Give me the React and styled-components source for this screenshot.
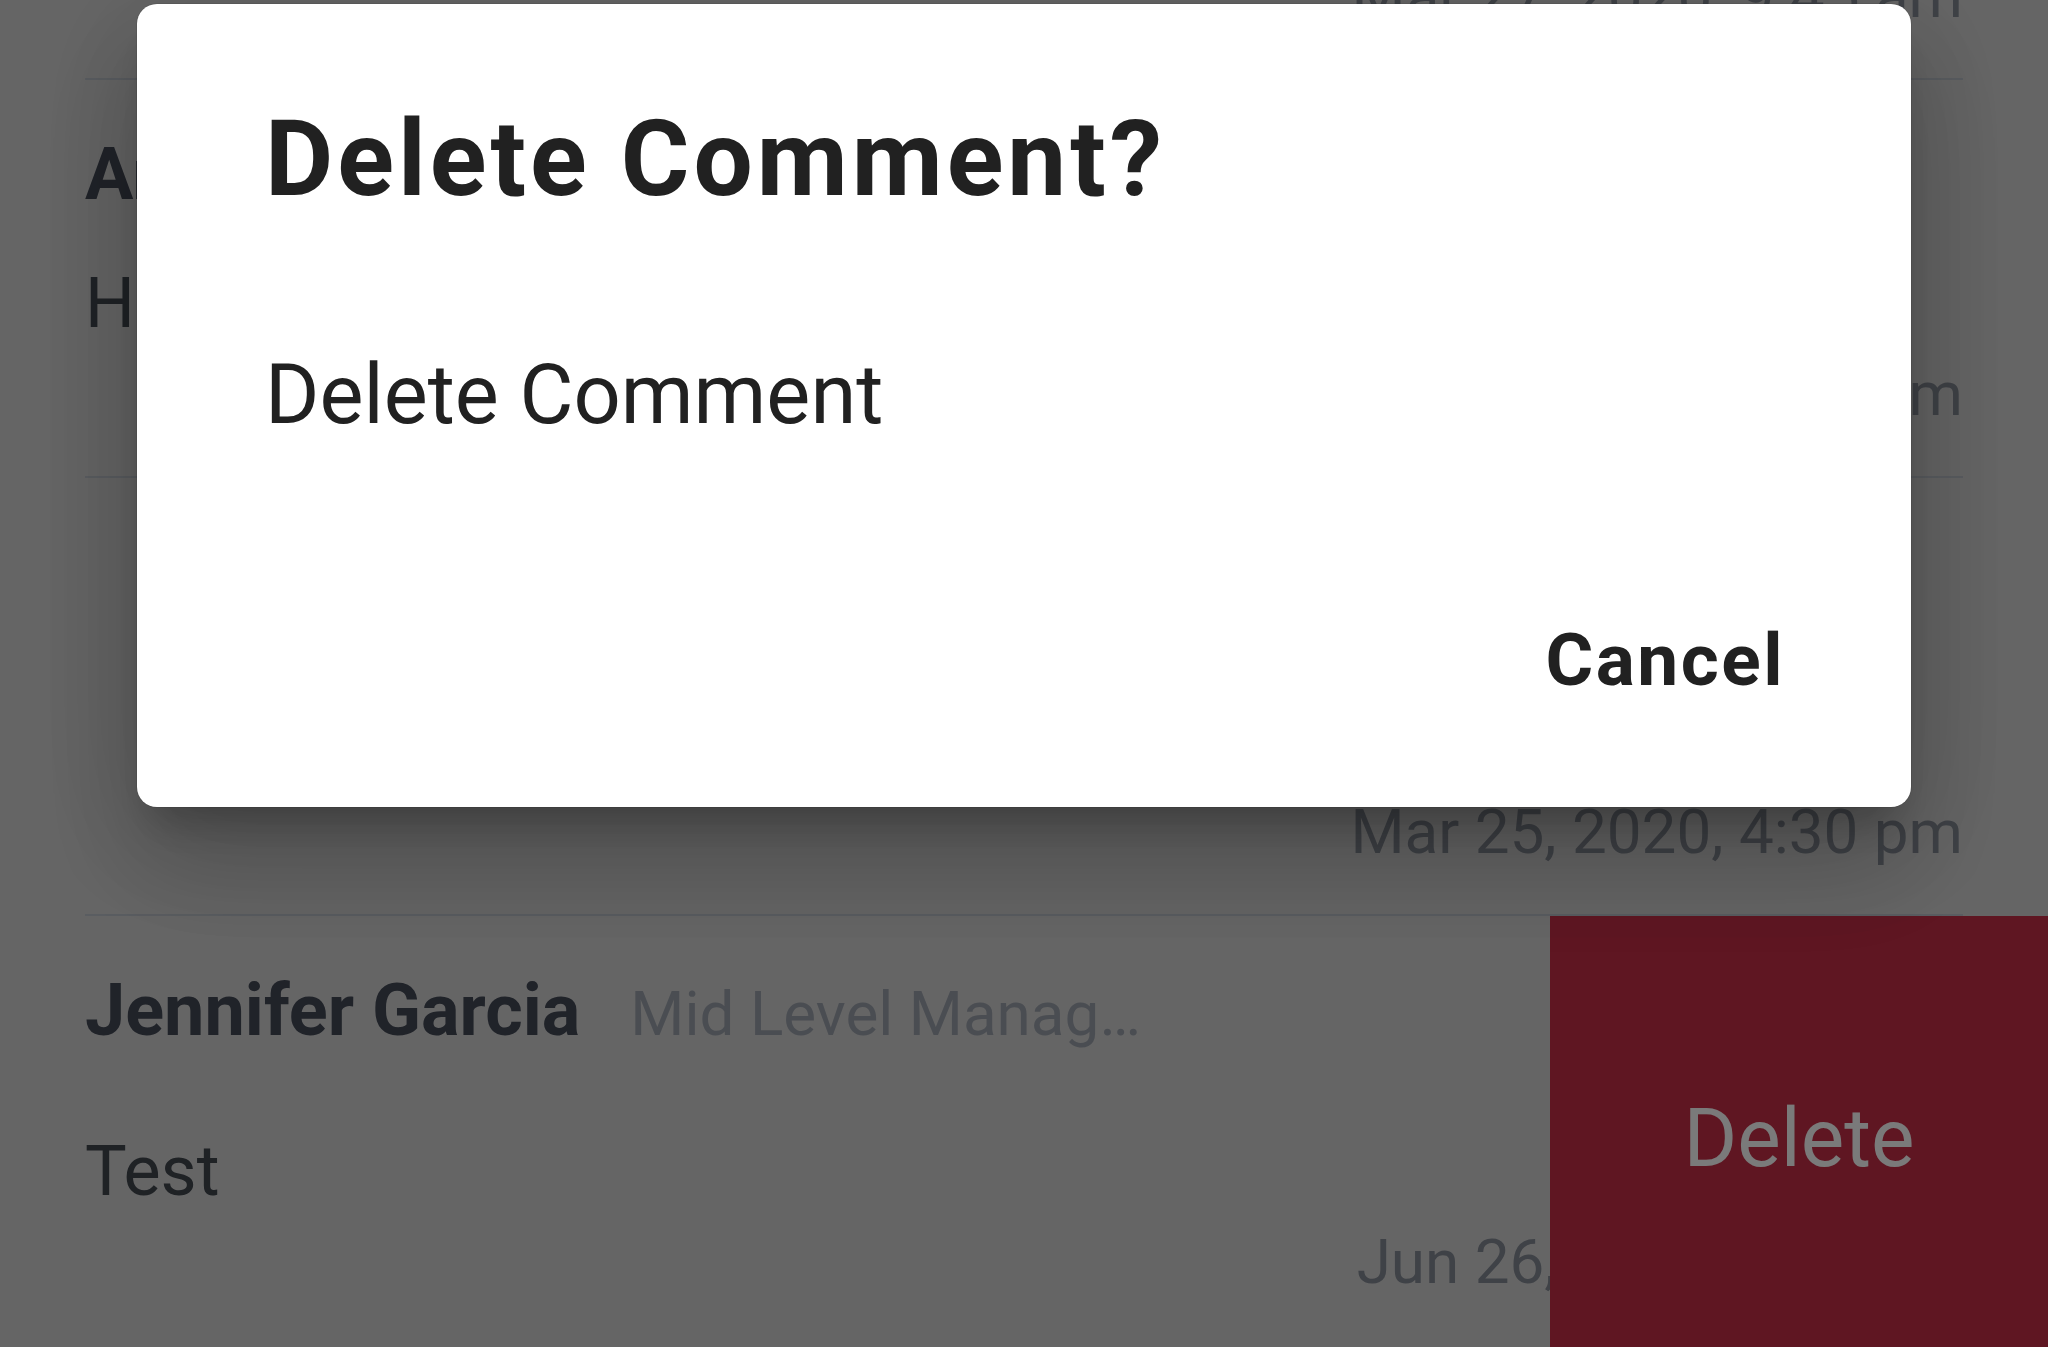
import React from 'react';
import styled, { createGlobalStyle } from 'styled-components';

const GlobalStyle = createGlobalStyle`
  html, body {
    margin: 0;
    padding: 0;
    background: #d4d4d4;
    overflow: hidden;
  }
  body {
    font-family: Roboto, "Liberation Sans", Arial, sans-serif;
  }
`;

const comments = [
  { id: 1, name: 'Brian Lee', text: 'Sounds good', date: 'Mar 27, 2020, 9:45 am', gap: 44 },
  { id: 2, name: 'Amanda Scott', text: 'Have a look at this', date: 'Mar 26, 2020, 11:02 am', gap: 44 },
  { id: 3, name: 'Kevin Brooks', text: 'Reply', date: 'Mar 25, 2020, 4:30 pm', gap: 84, indent: 160 },
  { id: 4, name: 'Jennifer Garcia', role: 'Mid Level Manag…', text: 'Test', date: 'Jun 26, 2020, 2:18 pm', gap: 73, swiped: true },
];

const Page = styled.div`
  min-height: 100vh;
  background: #d4d4d4;
`;

const List = styled.div`
  margin-top: -320px;
  padding: 0 85px;
`;

const Row = styled.div`
  position: relative;
  border-top: 2px solid #bcc2ca;
  padding: 52px 0 45px ${(p) => p.$indent || 0}px;

  &:last-child {
    padding-bottom: 60px;
  }
`;

const Header = styled.div`
  display: flex;
  align-items: baseline;
  gap: 50px;
  white-space: nowrap;
`;

const Name = styled.span`
  font-size: 72px;
  line-height: 86px;
  font-weight: 700;
  color: #434956;
`;

const Role = styled.span`
  font-size: 62px;
  line-height: 86px;
  color: #9ca2ac;
`;

const Body = styled.div`
  margin-top: ${(p) => p.$gap}px;
  font-size: 70px;
  line-height: 82px;
  color: #41474f;
`;

const Stamp = styled.div`
  margin-top: 13px;
  font-size: 62px;
  line-height: 74px;
  color: #848a94;
  text-align: right;
`;

// swipe action revealed under the row
const SwipeAction = styled.div`
  position: absolute;
  top: 0;
  bottom: 0;
  right: -85px;
  width: 498px;
  display: flex;
  align-items: center;
  justify-content: center;
  background: #c62e47;
  color: #ffffff;
  font-size: 82px;
`;

const Scrim = styled.div`
  position: fixed;
  inset: 0;
  display: flex;
  justify-content: center;
  align-items: flex-start;
  padding-top: 4px;
  background: rgba(0, 0, 0, 0.52);
`;

const Dialog = styled.div`
  width: 1774px;
  box-sizing: border-box;
  padding: 93px 0 103px 128px;
  background: #ffffff;
  border-radius: 20px;
  box-shadow: 0 0 0 1px rgba(0, 0, 0, 0.08), 0 30px 40px -16px rgba(0, 0, 0, 0.24),
    0 60px 110px 10px rgba(0, 0, 0, 0.15), 0 24px 130px 24px rgba(0, 0, 0, 0.12);
`;

const Title = styled.h2`
  margin: 0;
  font-size: 105px;
  line-height: 125px;
  font-weight: 700;
  letter-spacing: 4px;
  color: #212121;
`;

const Message = styled.p`
  margin: 124px 0 0;
  font-size: 83px;
  line-height: 98px;
  color: #212121;
`;

const Actions = styled.div`
  display: flex;
  justify-content: flex-end;
  margin-top: 172px;
  padding-right: 126px;
`;

const TextButton = styled.button`
  border: 0;
  padding: 0;
  background: none;
  font-family: inherit;
  font-size: 73px;
  line-height: 88px;
  font-weight: 700;
  letter-spacing: 2.5px;
  color: #212121;
`;

const Comment = ({ name, role, text, date, gap, indent, swiped }) => (
  <Row $indent={indent}>
    <Header>
      <Name>{name}</Name>
      {role && <Role>{role}</Role>}
    </Header>
    <Body $gap={gap}>{text}</Body>
    <Stamp>{date}</Stamp>
    {swiped && <SwipeAction>Delete</SwipeAction>}
  </Row>
);

export default function App() {
  return (
    <>
      <GlobalStyle />
      <Page>
        <List>
          {comments.map((c) => (
            <Comment key={c.id} {...c} />
          ))}
        </List>
      </Page>
      <Scrim>
        <Dialog>
          <Title>Delete Comment?</Title>
          <Message>Delete Comment</Message>
          <Actions>
            <TextButton>Cancel</TextButton>
          </Actions>
        </Dialog>
      </Scrim>
    </>
  );
}
